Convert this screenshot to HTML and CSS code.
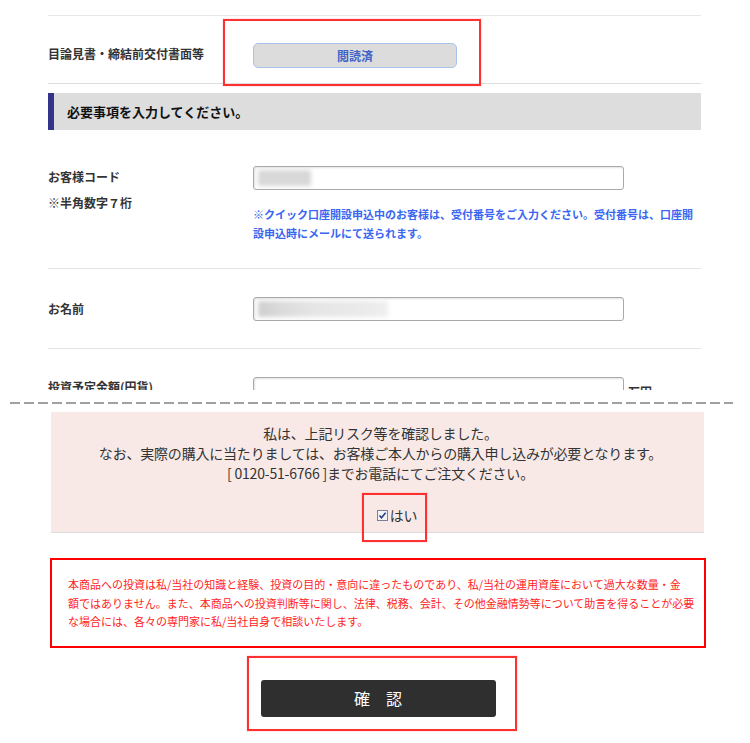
FILE: index.html
```html
<!DOCTYPE html>
<html lang="ja">
<head>
<meta charset="utf-8">
<title>確認</title>
<link rel="stylesheet" href="styles.css">
</head>
<body>
<div class="top">
  <div class="row-doc">
    <div class="lab lab-doc">目論見書・締結前交付書面等</div>
    <div class="readbtn">閲読済</div>
  </div>
  <div class="heading">必要事項を入力してください。</div>
  <div class="field field-code">
    <div class="lab lab-code">
      <p class="l1">お客様コード</p>
      <p class="l2">※半角数字７桁</p>
    </div>
    <div class="val">
      <div class="input"><span class="blur blur-code"></span></div>
      <p class="note">※クイック口座開設申込中のお客様は、受付番号をご入力ください。受付番号は、口座開<br>設申込時にメールにて送られます。</p>
    </div>
  </div>
  <div class="field field-name">
    <div class="lab lab-name">お名前</div>
    <div class="val">
      <div class="input"><span class="blur blur-name"></span></div>
    </div>
  </div>
  <div class="field field-amount">
    <div class="lab lab-amount">投資予定金額(円貨)</div>
    <div class="val val-amount">
      <div class="input"></div>
      <span class="unit">万円</span>
    </div>
  </div>
</div>
<div class="cut"></div>
<div class="bottom">
  <div class="confirm-box">
    <p>私は、上記リスク等を確認しました。</p>
    <p>なお、実際の購入に当たりましては、お客様ご本人からの購入申し込みが必要となります。</p>
    <p>[ 0120-51-6766 ]までお電話にてご注文ください。</p>
    <div class="check">
      <svg width="11" height="11" viewBox="0 0 11 11" aria-hidden="true"><rect x="0.5" y="0.5" width="10" height="10" fill="#f3f3f6" stroke="#7d7f95"/><path d="M2.5 5.6 L4.5 7.8 L8.6 2.8" fill="none" stroke="#26378a" stroke-width="1.5"/></svg>
      <span>はい</span>
    </div>
  </div>
  <div class="disclaimer">本商品への投資は私/当社の知識と経験、投資の目的・意向に違ったものであり、私/当社の運用資産において過大な数量・金<br>額ではありません。また、本商品への投資判断等に関し、法律、税務、会計、その他金融情勢等について助言を得ることが必要<br>な場合には、各々の専門家に私/当社自身で相談いたします。</div>
  <div class="submit">確　認</div>
</div>
<div class="mark mark-doc"></div>
<div class="mark mark-check"></div>
<div class="mark mark-submit"></div>
</body>
</html>
```
FILE: styles.css
```css
html, body {
  margin: 0;
  padding: 0;
}
body {
  position: relative;
  width: 750px;
  height: 743px;
  overflow: hidden;
  background: #fff;
  color: #333;
  font-family: "Noto Sans CJK JP", "Noto Sans", sans-serif;
}
p {
  margin: 0;
}
.top {
  height: 390px;
  overflow: hidden;
  box-sizing: border-box;
  padding: 15px 49px 0 48px;
}
.row-doc {
  display: flex;
  align-items: center;
  border-top: 1px solid #e8e8e8;
  border-bottom: 1px solid #dedede;
  padding: 27px 0 15px;
}
.lab {
  width: 205px;
  flex: none;
  font-size: 12px;
  font-weight: bold;
  line-height: 18px;
  color: #333;
}
.lab-doc {
  margin-bottom: 4px;
}
.readbtn {
  width: 202px;
  height: 23px;
  border: 1px solid #a9c4e8;
  border-radius: 5px;
  background: #dcdcdc;
  color: #4262c8;
  font-size: 12px;
  font-weight: bold;
  line-height: 23px;
  text-align: center;
}
.heading {
  margin-top: 9px;
  height: 37px;
  box-sizing: border-box;
  border-left: 6px solid #343489;
  background: #dddddd;
  padding-left: 13px;
  font-size: 13px;
  font-weight: bold;
  line-height: 37px;
  color: #111;
}
.field {
  display: flex;
  border-bottom: 1px solid #e4e4e4;
}
.field-code {
  padding: 36px 0 25px;
}
.field-name {
  padding: 28px 0 27px;
}
.field-amount {
  padding-top: 28px;
  border-bottom: none;
}
.lab-code {
  padding-top: 2px;
}
.lab-code .l2 {
  margin-top: 8px;
}
.lab-name {
  padding-top: 3px;
}
.lab-amount {
  padding-top: 1px;
}
.val {
  flex: 1;
}
.val-amount {
  display: flex;
  align-items: flex-end;
}
.input {
  width: 361px;
  height: 16px;
  padding: 3px 4px;
  border: 1px solid #aaa;
  border-radius: 3px;
  box-shadow: inset 1px 1px 2px rgba(0, 0, 0, 0.12);
  background: #fff;
  overflow: hidden;
}
.blur {
  display: block;
  height: 16px;
  filter: blur(2px);
}
.blur-code {
  width: 53px;
  background: #d8d8d8;
}
.blur-name {
  width: 130px;
  background: linear-gradient(90deg, #cfcfcf 0%, #dcdcdc 20%, #e6e6e6 45%, #eaeaea 80%, #efefef 100%);
}
.note {
  margin-top: 15px;
  font-size: 11px;
  line-height: 19px;
  font-weight: bold;
  color: #3a66f2;
}
.unit {
  margin-left: 4px;
  font-size: 12px;
  font-weight: bold;
  line-height: 18px;
}
.cut {
  margin: 12px 17px 0 10px;
  height: 2px;
  background: repeating-linear-gradient(90deg, #a0a0a0 0 10px, transparent 10px 14px);
}
.bottom {
  padding: 0 44px 0 50px;
}
.confirm-box {
  margin: 8px 2px 0 1px;
  padding: 11px 0 7px 6px;
  background: #f8e9e7;
  border-bottom: 1px solid #dcdcdc;
  text-align: center;
  font-size: 14px;
  line-height: 20px;
  letter-spacing: -0.2px;
  color: #333;
}
.check {
  margin-top: 22px;
  display: flex;
  justify-content: center;
  align-items: center;
  gap: 2px;
  padding-left: 33px;
}
.disclaimer {
  margin-top: 25px;
  border: 2px solid #ff0000;
  padding: 15px 6px 15px 16px;
  font-size: 11px;
  line-height: 18.5px;
  color: #ff2424;
  white-space: nowrap;
}
.submit {
  margin: 32px auto 0;
  width: 235px;
  height: 37px;
  background: #2f2f2f;
  border-radius: 3px;
  color: #fff;
  font-size: 16px;
  line-height: 37px;
  text-align: center;
}
.mark {
  position: absolute;
  border: 2px solid #ff3030;
  box-shadow: 0 0 1px rgba(255, 60, 60, 0.6);
}
.mark-doc {
  left: 223px;
  top: 19px;
  width: 254px;
  height: 63px;
}
.mark-check {
  left: 362px;
  top: 493px;
  width: 61px;
  height: 45px;
}
.mark-submit {
  left: 247px;
  top: 656px;
  width: 266px;
  height: 71px;
}
```
